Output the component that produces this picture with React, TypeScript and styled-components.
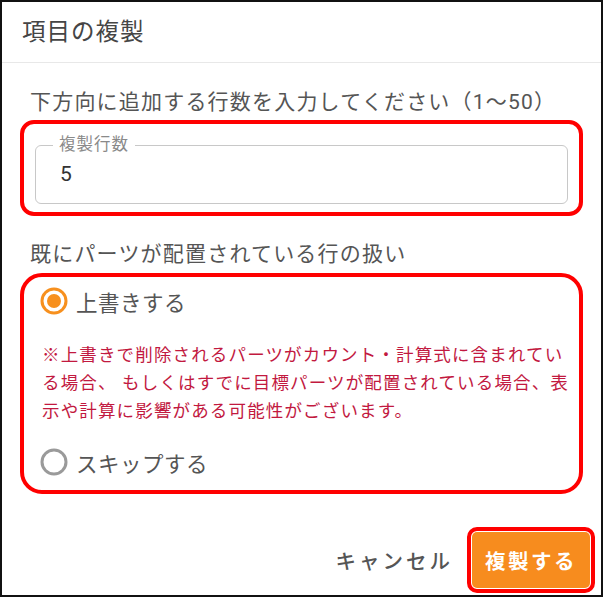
import styled, { createGlobalStyle } from 'styled-components'

const GlobalStyle = createGlobalStyle`
  html, body {
    margin: 0;
    padding: 0;
    background: #ffffff;
  }
  * {
    box-sizing: border-box;
  }
`

const Frame = styled.div`
  width: 603px;
  height: 597px;
  border: 2px solid #111111;
  background: #ffffff;
  display: flex;
  flex-direction: column;
  font-family: Roboto, "Noto Sans CJK JP", sans-serif;
  color: #555555;
`

const Header = styled.div`
  height: 61px;
  padding-left: 20px;
  display: flex;
  align-items: center;
  border-bottom: 1px solid #e8e8e8;
`

const Title = styled.h2`
  margin: 0 0 4px 0;
  font-size: 23.5px;
  font-weight: 400;
  color: #454545;
  letter-spacing: 1px;
`

const Body = styled.div`
  padding: 27px 3px 0 18px;
  display: flex;
  flex-direction: column;
`

const Prompt = styled.p<{ $gap: number }>`
  margin: 0 0 ${p => p.$gap}px 10px;
  font-size: 21px;
  line-height: 24px;
  color: #555555;
  letter-spacing: 1.2px;
`

const Highlight = styled.div<{ $radius: number }>`
  border: 4px solid #ff0000;
  border-radius: ${p => p.$radius}px;
`

const FieldBox = styled(Highlight)`
  width: 563px;
  padding: 11px 11px 8px 11px;
  margin-bottom: 26px;
`

const Outline = styled.fieldset`
  margin: 0;
  border: 1px solid #c8c8c8;
  border-radius: 6px;
  padding: 0 24px 17px 24px;
`

const Legend = styled.legend`
  padding: 0 6px;
  margin-left: -7px;
  font-size: 16.5px;
  line-height: 20px;
  color: #8a8a8a;
  letter-spacing: 1px;
`

const NumberInput = styled.input`
  margin-top: 7px;
  display: block;
  width: 100%;
  border: none;
  outline: none;
  padding: 0;
  font-family: Roboto, "Noto Sans CJK JP", sans-serif;
  font-size: 21px;
  line-height: 24px;
  height: 24px;
  color: #333333;
  background: transparent;
`

const OptionBox = styled(Highlight)`
  width: 563px;
  padding: 10px 3px 14px 16px;
`

const RadioRow = styled.label`
  display: flex;
  align-items: center;
  gap: 8px;
  height: 28px;
  font-size: 21.5px;
  color: #555555;
  letter-spacing: 0.5px;
`

const Warning = styled.p`
  margin: 26px 0 23px 2px;
  font-size: 17.5px;
  line-height: 28px;
  color: #c2193f;
  letter-spacing: 1.15px;
  white-space: nowrap;
`

const Footer = styled.div`
  margin-top: 33px;
  padding-right: 3px;
  display: flex;
  justify-content: flex-end;
  align-items: center;
  gap: 14px;
`

const TextButton = styled.button`
  border: none;
  background: transparent;
  padding: 0;
  font-family: Roboto, "Noto Sans CJK JP", sans-serif;
  font-size: 20.5px;
  font-weight: 500;
  letter-spacing: 3px;
  color: #555555;
  cursor: pointer;
`

const ButtonHighlight = styled(Highlight)`
  padding: 1px;
`

const PrimaryButton = styled.button`
  width: 118px;
  height: 56px;
  border: none;
  border-radius: 5px;
  background: #f78c1e;
  color: #ffffff;
  font-family: Roboto, "Noto Sans CJK JP", sans-serif;
  font-size: 20.5px;
  font-weight: 700;
  letter-spacing: 2.5px;
  cursor: pointer;
`

function RadioIcon({ checked }: { checked: boolean }) {
  const color = checked ? '#f7901e' : '#9a9a9a'
  return (
    <svg width="28" height="28" viewBox="0 0 28 28">
      <circle cx="14" cy="14" r="12" fill="none" stroke={color} strokeWidth="3" />
      {checked && <circle cx="14" cy="14" r="7" fill={color} />}
    </svg>
  )
}

export default function App() {
  return (
    <>
      <GlobalStyle />
      <Frame>
        <Header>
          <Title>項目の複製</Title>
        </Header>
        <Body>
          <Prompt $gap={6}>下方向に追加する行数を入力してください（1〜50）</Prompt>
          <FieldBox $radius={14}>
            <Outline>
              <Legend>複製行数</Legend>
              <NumberInput type="text" defaultValue="5" />
            </Outline>
          </FieldBox>
          <Prompt $gap={7}>既にパーツが配置されている行の扱い</Prompt>
          <OptionBox $radius={22}>
            <RadioRow>
              <RadioIcon checked />
              上書きする
            </RadioRow>
            <Warning>
              ※上書きで削除されるパーツがカウント・計算式に含まれてい
              <br />
              る場合、 もしくはすでに目標パーツが配置されている場合、表
              <br />
              示や計算に影響がある可能性がございます。
            </Warning>
            <RadioRow>
              <RadioIcon checked={false} />
              スキップする
            </RadioRow>
          </OptionBox>
          <Footer>
            <TextButton>キャンセル</TextButton>
            <ButtonHighlight $radius={10}>
              <PrimaryButton>複製する</PrimaryButton>
            </ButtonHighlight>
          </Footer>
        </Body>
      </Frame>
    </>
  )
}
